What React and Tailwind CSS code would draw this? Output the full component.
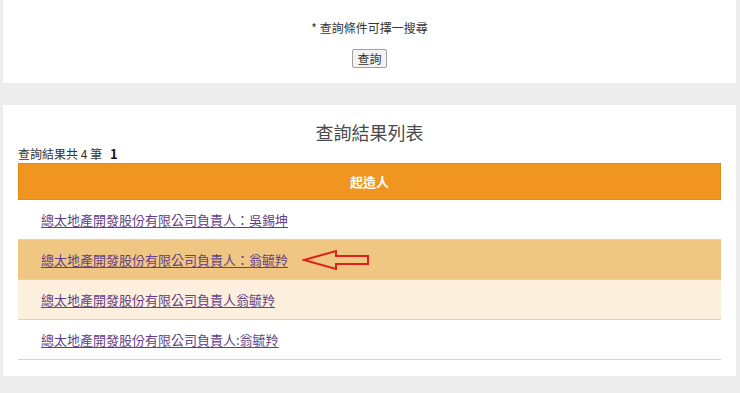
import React from "react";

const font = { fontFamily: '"Noto Sans CJK TC", "Noto Sans", sans-serif' };

function Row({ text, bg, children }) {
  return (
    <div className={`relative h-[40px] border-b border-solid border-[#e8d39f] ${bg} flex items-center pl-[23px]`}>
      <a href="#" className="text-[13px] leading-[16px] text-[#623f88] underline underline-offset-2">
        {text}
      </a>
      {children}
    </div>
  );
}

export default function App() {
  return (
    <div className="min-h-[393px] w-[740px] bg-[#ededed]" style={font}>
      <div className="ml-[3px] w-[733px] h-[83px] bg-white flex flex-col items-center pt-[19px]">
        <div className="text-[12px] leading-[18px] text-[#333]">* 查詢條件可擇一搜尋</div>
        <button className="mt-[12px] h-[19px] px-[4px] text-[12px] leading-[15px] text-[#333] bg-[#f3f3f3] border border-[#a0a0a0] rounded-[2px]">
          查詢
        </button>
      </div>
      <div className="ml-[3px] mt-[22px] w-[733px] bg-white pl-[15px] pr-[15px] pt-[14px] pb-[16px]">
        <div className="text-center text-[18px] leading-[26px] text-[#4a4a4a]">查詢結果列表</div>
        <div className="h-[18px] text-[12px] leading-[18px] text-[#333] flex items-end">
          <span>查詢結果共&nbsp;4&nbsp;筆</span>
          <span className="ml-[8px] font-bold text-[13px] text-[#111]">1</span>
        </div>
        <div className="h-[37px] bg-[#f0951f] border border-[#e28a18] flex items-center justify-center text-white font-bold text-[13px]">
          起造人
        </div>
        <Row text="總太地產開發股份有限公司負責人：吳錫坤" bg="bg-white" />
        <Row text="總太地產開發股份有限公司負責人：翁毓羚" bg="bg-[#f0c683]">
          <svg className="absolute left-[284px] top-[9px]" width="70" height="24" viewBox="0 0 70 24">
            <polygon
              points="2,11 34,2 34,7 66,7 66,15 34,15 34,20"
              fill="none"
              stroke="#e0201c"
              strokeWidth="2"
              strokeLinejoin="miter"
            />
          </svg>
        </Row>
        <Row text="總太地產開發股份有限公司負責人翁毓羚" bg="bg-[#fdefdd]" />
        <Row text="總太地產開發股份有限公司負責人:翁毓羚" bg="bg-white" />
      </div>
    </div>
  );
}
